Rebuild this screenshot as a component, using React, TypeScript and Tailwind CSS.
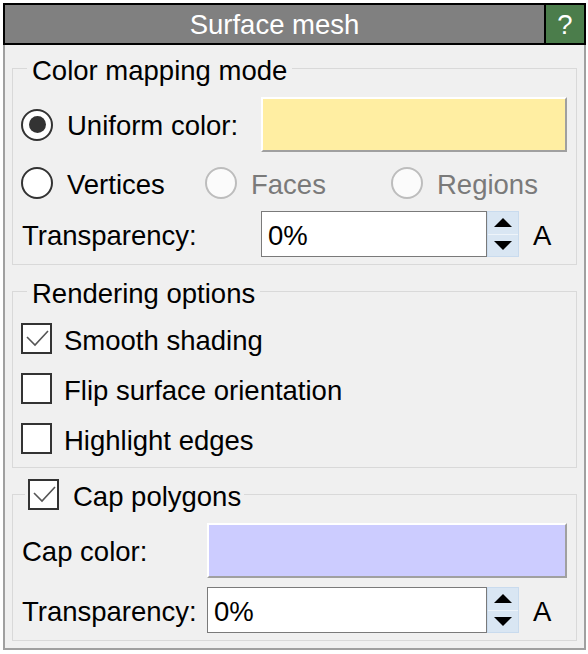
import React from 'react';

const FONT = "font-['Liberation_Sans',Arial,sans-serif]";

function Radio({ checked = false, disabled = false, label }: { checked?: boolean; disabled?: boolean; label: string }) {
  return (
    <div className="flex items-center">
      <span
        className={`w-[32px] h-[32px] rounded-full border-2 flex items-center justify-center shrink-0 ${
          disabled ? 'border-[#bdbdbd] bg-[#fbfbfb]' : 'border-[#333333] bg-white'
        }`}
      >
        {checked && <span className="w-[17px] h-[17px] rounded-full bg-[#333333]" />}
      </span>
      <span className={`ml-[14px] pt-[2px] ${disabled ? 'text-[#7a7a7a]' : 'text-black'}`}>{label}</span>
    </div>
  );
}

function Check({ checked = false }: { checked?: boolean }) {
  return (
    <span className="w-[31px] h-[31px] border-2 border-[#333333] bg-white shrink-0 flex">
      {checked && (
        <svg width="27" height="27" viewBox="0 0 27 27">
          <path d="M4 12 L12 20 L25 6" fill="none" stroke="#555555" strokeWidth="1.6" />
        </svg>
      )}
    </span>
  );
}

function CheckRow({ checked = false, label }: { checked?: boolean; label: string }) {
  return (
    <div className="h-[50px] flex items-center">
      <Check checked={checked} />
      <span className="ml-[12px] pt-[4px]">{label}</span>
    </div>
  );
}

function Swatch({ color, width }: { color: string; width: string }) {
  return (
    <div
      className={`${width} h-[55px] border-2 border-t-white border-l-white border-b-[#a0a0a0] border-r-[#a0a0a0] ${color}`}
    />
  );
}

function SpinInput({ width }: { width: string }) {
  return (
    <div className="flex items-center h-[46px]">
      <div className={`${width} h-[46px] bg-white border border-[#7a7a7a] flex items-center pl-[6px]`}>
        <span className="pt-[2px]">0%</span>
      </div>
      <div className="w-[32px] h-[46px] flex flex-col border border-[#c9dbee] bg-[#d9e6f3]">
        <div className="flex-1 flex items-center justify-center border-b border-[#eef4fa]">
          <svg width="18" height="9" viewBox="0 0 18 9">
            <path d="M9 0 L18 9 L0 9 Z" fill="#000" />
          </svg>
        </div>
        <div className="flex-1 flex items-center justify-center">
          <svg width="18" height="9" viewBox="0 0 18 9">
            <path d="M0 0 L18 0 L9 9 Z" fill="#000" />
          </svg>
        </div>
      </div>
      <span className="ml-[14px] pt-[2px]">A</span>
    </div>
  );
}

function Group({ legend, legendClass, children }: { legend: React.ReactNode; legendClass: string; children: React.ReactNode }) {
  return (
    <fieldset className="border border-[#d9d9d9] px-[8px] min-w-0">
      <legend className={`${legendClass} h-[31px]`}>{legend}</legend>
      {children}
    </fieldset>
  );
}

export default function App() {
  return (
    <div className={`w-[588px] h-[654px] bg-white pl-[3px] pt-[3px] ${FONT} text-[27.5px] leading-[31px] text-black`}>
      <div className="w-[583px]">
        {/* Title bar */}
        <div className="h-[42px] border-2 border-black bg-[#808080] flex">
          <div className="flex-1 flex items-center justify-center text-white">Surface mesh</div>
          <div className="w-[40px] border-l-2 border-black bg-[#4b7d4b] flex items-center justify-center text-white">?</div>
        </div>

        <div className="bg-[#f0f0f0] border-2 border-t-0 border-[#a0a0a0] px-[7px] pt-[8px] pb-[7px]">
          {/* Color mapping mode */}
          <Group legend={<span className="block pt-[4px] leading-[27px]">Color mapping mode</span>} legendClass="ml-[6px] px-[5px]">
            <div className="mt-[13px] h-[55px] flex items-center">
              <div className="w-[240px]">
                <Radio checked label="Uniform color:" />
              </div>
              <Swatch color="bg-[#ffeea2]" width="w-[306px]" />
            </div>
            <div className="h-[59px] pt-[3px] flex items-center">
              <div className="w-[184px]">
                <Radio label="Vertices" />
              </div>
              <div className="w-[186px]">
                <Radio disabled label="Faces" />
              </div>
              <Radio disabled label="Regions" />
            </div>
            <div className="h-[46px] flex items-center">
              <div className="w-[240px] pl-[1px] pt-[2px]">Transparency:</div>
              <SpinInput width="w-[226px]" />
            </div>
            <div className="h-[7px]" />
          </Group>

          {/* Rendering options */}
          <div className="mt-[11px]">
            <Group legend={<span className="block pt-[4px] leading-[27px]">Rendering options</span>} legendClass="ml-[6px] px-[5px]">
              <div className="mt-[6px]">
                <CheckRow checked label="Smooth shading" />
                <CheckRow label="Flip surface orientation" />
                <CheckRow label="Highlight edges" />
              </div>
              <div className="h-[4px]" />
            </Group>
          </div>

          {/* Cap polygons */}
          <div className="mt-[11px]">
            <Group
              legend={
                <span className="flex items-center h-[31px]">
                  <Check checked />
                  <span className="ml-[14px] pt-[4px]">Cap polygons</span>
                </span>
              }
              legendClass="ml-[4px] px-[3px]"
            >
              <div className="mt-[13px] h-[55px] flex items-center">
                <div className="w-[186px] pl-[1px] pt-[2px]">Cap color:</div>
                <Swatch color="bg-[#ccccff]" width="w-[360px]" />
              </div>
              <div className="mt-[9px] h-[46px] flex items-center">
                <div className="w-[186px] pl-[1px] pt-[2px]">Transparency:</div>
                <SpinInput width="w-[280px]" />
              </div>
              <div className="h-[7px]" />
            </Group>
          </div>
        </div>
      </div>
    </div>
  );
}
